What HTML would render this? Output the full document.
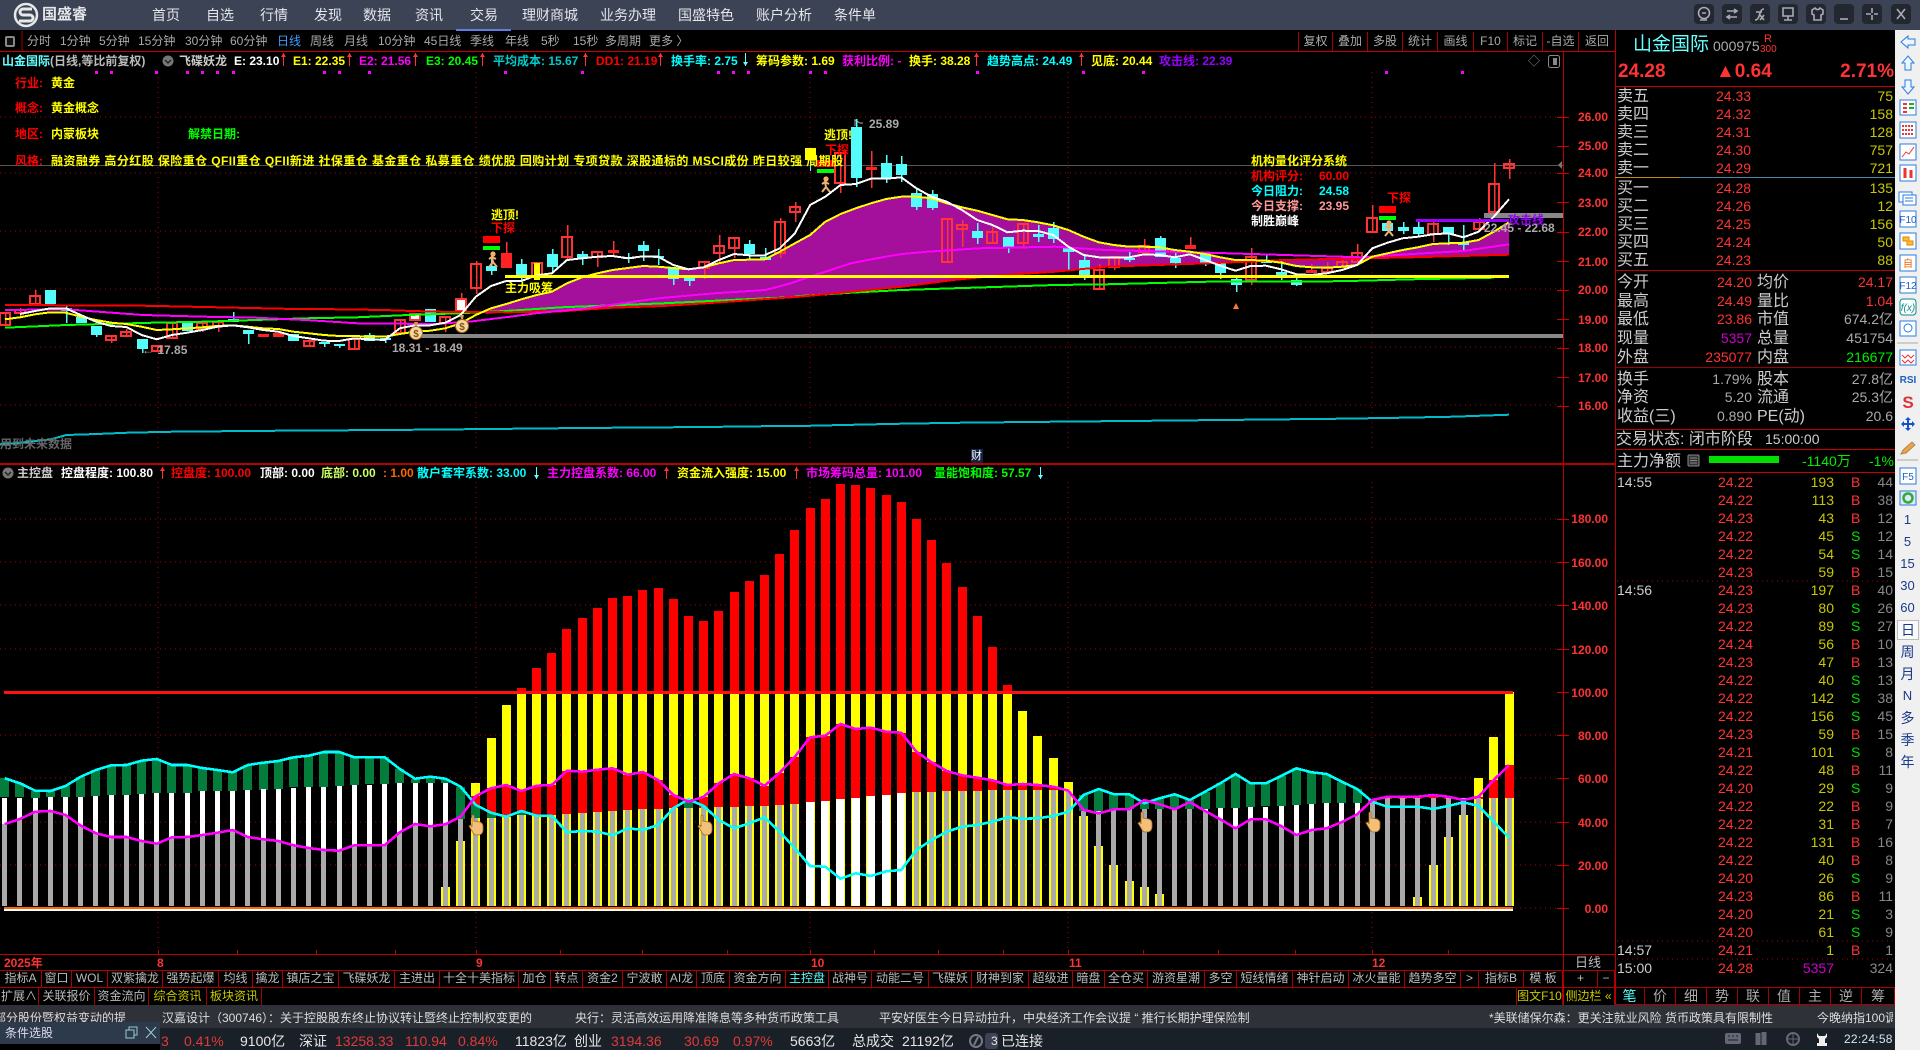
<!DOCTYPE html>
<html><head><meta charset="utf-8"><title>国盛睿</title>
<style>
html,body{margin:0;padding:0;background:#000;width:1920px;height:1050px;overflow:hidden}
body{position:relative;font:12px "Liberation Sans","WenQuanYi Zen Hei","Noto Sans CJK SC",sans-serif;color:#bbb}
.a{position:absolute;white-space:nowrap;line-height:16px;height:16px}
.bd{font-weight:bold}
.bar{position:absolute;left:0;top:0;width:1920px;height:30px;background:#3c4355}
.n{position:absolute;top:7px;font-size:14px;line-height:16px;color:#e4e6ea;white-space:nowrap}
.tb{position:absolute;top:33px;line-height:16px;color:#aaa;white-space:nowrap}
.btn{position:absolute;top:32px;height:19px;line-height:19px;text-align:center;color:#aaa;border-left:1px solid #a00;box-sizing:border-box}
.c{position:absolute;height:17px;line-height:16px;text-align:center;border-right:1px solid #a00;box-sizing:border-box;color:#bbb;white-space:nowrap;overflow:hidden}
.r1{top:970px}.r2{top:988px}.tab{top:988px;font-size:14px;color:#aaa}
.ax{position:absolute;right:312px;color:#ff3333;font-weight:bold;line-height:16px;white-space:nowrap}
.l{position:absolute;left:1617px;font-size:16px;line-height:18px;color:#ccc;white-space:nowrap;margin-top:1px}
.l2{position:absolute;left:1757px;font-size:16px;line-height:18px;color:#ccc;white-space:nowrap;margin-top:1px}
.v{position:absolute;font-size:14px;line-height:18px;white-space:nowrap;text-align:right}
.v1{left:1680px;width:72px;color:#ff3333}
.v2{left:1800px;width:93px;color:#ff3333}
.pr{left:1716px;text-align:left;color:#ff3333}
.q{left:1820px;width:73px;color:#c8c800}
.k{position:absolute;left:1615px;width:280px;height:18px;font-size:14px;line-height:18px}
.k i{position:absolute;font-style:normal;white-space:nowrap}
.tm{left:2px;color:#ccc}.p{left:103px;color:#ff3333}.qt{right:61px;color:#c8c800}.bs{left:236px;color:#ff3333}.g{color:#00e000}.la{right:2px;color:#888}
.sd{position:absolute;left:1895px;width:25px;text-align:center;color:#1a3a8a;font-size:13px;line-height:18px}
.tk{position:absolute;top:1010px;color:#ddd;line-height:16px;white-space:nowrap}
.s4{position:absolute;top:1033px;font-size:14px;line-height:16px;white-space:nowrap;color:#e6e6e6}
.rd{color:#e03a3a}
</style></head><body>
<svg id="s" width="1920" height="1050" viewBox="0 0 1920 1050" style="position:absolute;left:0;top:0" xmlns="http://www.w3.org/2000/svg"><g id="chart"></g></svg>

<div class="bar"></div><div style="position:absolute;left:456px;top:29px;width:55px;height:2px;background:#5b7fe0"></div>
<svg width="30" height="30" style="position:absolute;left:11px;top:0"><circle cx="15" cy="15" r="11" fill="none" stroke="#e8e8e8" stroke-width="2.5"/><path d="M21 9H12a3 3 0 0 0 0 6h7a3 3 0 0 1 0 6H8" fill="none" stroke="#e8e8e8" stroke-width="3"/></svg>
<div class="n" style="left:42px;font-size:15px;font-weight:bold">国盛睿</div>
<div class="n" style="left:152px">首页</div><div class="n" style="left:206px">自选</div><div class="n" style="left:260px">行情</div><div class="n" style="left:314px">发现</div><div class="n" style="left:363px">数据</div><div class="n" style="left:415px">资讯</div><div class="n" style="left:470px">交易</div><div class="n" style="left:522px">理财商城</div><div class="n" style="left:600px">业务办理</div><div class="n" style="left:678px">国盛特色</div><div class="n" style="left:756px">账户分析</div><div class="n" style="left:834px">条件单</div>
<svg width="226" height="30" style="position:absolute;left:1694px;top:0" viewBox="0 0 226 30">
<g fill="#23272f"><rect x="0" y="4" width="20" height="20" rx="4"/><rect x="28" y="4" width="20" height="20" rx="4"/><rect x="56" y="4" width="20" height="20" rx="4"/><rect x="84" y="4" width="20" height="20" rx="4"/><rect x="112" y="4" width="20" height="20" rx="4"/><rect x="140" y="4" width="20" height="20" rx="4"/><rect x="168" y="4" width="20" height="20" rx="4"/><rect x="197" y="4" width="20" height="20" rx="4"/></g>
<g fill="none" stroke="#aab" stroke-width="1.6"><circle cx="10" cy="13" r="5.5"/><path d="M8 13h4M6 20h7"/><path d="M33 11h10M33 17h10M40 9l3 2-3 2M36 15l-3 2 3 2"/><path d="M61 20c3 0 4-3 5-7 1-3 2-4 4-4M62 12h6M66 15l4 5M70 15l-4 5"/><path d="M89 8h10v8H89zM94 16v4M90 20h8"/><path d="M118 10l3-2c1 2 4 2 5 0l3 2v4l-2 1v5h-7v-5l-2-1z"/><path d="M146 19h8"/><path d="M178 8v5M178 15v5M172 14h5M180 14h4"/><path d="M203 9l8 10M211 9l-8 10"/></g></svg>

<!-- toolbar -->
<svg width="24" height="20" style="position:absolute;left:0;top:31px"><rect x="5" y="5" width="10" height="11" rx="2" fill="#888"/><rect x="7" y="7" width="6" height="7" fill="#111"/><path d="M22 0v20" stroke="#a00"/></svg>
<div class="tb" style="left:27px">分时</div><div class="tb" style="left:60px">1分钟</div><div class="tb" style="left:99px">5分钟</div><div class="tb" style="left:138px">15分钟</div><div class="tb" style="left:185px">30分钟</div><div class="tb" style="left:230px">60分钟</div><div class="tb" style="left:277px;color:#3a9cff">日线</div><div class="tb" style="left:310px">周线</div><div class="tb" style="left:344px">月线</div><div class="tb" style="left:378px">10分钟</div><div class="tb" style="left:424px">45日线</div><div class="tb" style="left:470px">季线</div><div class="tb" style="left:505px">年线</div><div class="tb" style="left:541px">5秒</div><div class="tb" style="left:573px">15秒</div><div class="tb" style="left:605px">多周期</div><div class="tb" style="left:649px">更多 〉</div>
<div class="btn" style="left:1298px;width:34px">复权</div><div class="btn" style="left:1332px;width:35px">叠加</div><div class="btn" style="left:1367px;width:35px">多股</div><div class="btn" style="left:1402px;width:35px">统计</div><div class="btn" style="left:1437px;width:36px">画线</div><div class="btn" style="left:1473px;width:34px">F10</div><div class="btn" style="left:1507px;width:35px">标记</div><div class="btn" style="left:1542px;width:36px">-自选</div><div class="btn" style="left:1578px;width:37px">返回</div>

<!-- main info row -->
<div class="a bd" style="left:2px;top:53px;color:#66ffff">山金国际<span style="color:#bbb">(日线,等比前复权)</span></div>
<svg width="14" height="14" style="position:absolute;left:161px;top:54px"><circle cx="7" cy="7" r="5.5" fill="#777"/><path d="M4 6l3 3 3-3" fill="none" stroke="#222" stroke-width="1.4"/></svg>
<div class="a bd" style="left:179px;top:53px;color:#ccc">飞碟妖龙</div>
<div class="a bd" style="left:234px;top:53px;color:#fff">E: 23.10</div>
<div class="a bd" style="left:293px;top:53px;color:#ff0">E1: 22.35</div>
<div class="a bd" style="left:359px;top:53px;color:#f0f">E2: 21.56</div>
<div class="a bd" style="left:426px;top:53px;color:#0f0">E3: 20.45</div>
<div class="a bd" style="left:493px;top:53px;color:#0cc">平均成本: 15.67</div>
<div class="a bd" style="left:596px;top:53px;color:#f00">DD1: 21.19</div>
<div class="a bd" style="left:671px;top:53px;color:#0ff">换手率: 2.75</div>
<div class="a bd" style="left:756px;top:53px;color:#ff0">筹码参数: 1.69</div>
<div class="a bd" style="left:842px;top:53px;color:#f0f">获利比例: -</div>
<div class="a bd" style="left:909px;top:53px;color:#ff0">换手: 38.28</div>
<div class="a bd" style="left:987px;top:53px;color:#0ff">趋势高点: 24.49</div>
<div class="a bd" style="left:1091px;top:53px;color:#ff0">见底: 20.44</div>
<div class="a bd" style="left:1159px;top:53px;color:#90f">攻击线: 22.39</div>
<div class="a" style="left:1528px;top:53px;color:#888">◇</div>
<svg width="12" height="14" style="position:absolute;left:1548px;top:55px"><rect x="0.5" y="0.5" width="11" height="12" rx="2" fill="none" stroke="#888"/><rect x="5" y="3" width="4" height="7" fill="#888"/></svg>

<!-- left text -->
<div class="a bd" style="left:15px;top:75px;color:#f00">行业:<span style="color:#ff0;position:absolute;left:36px">黄金</span></div>
<div class="a bd" style="left:15px;top:100px;color:#f00">概念:<span style="color:#ff0;position:absolute;left:36px">黄金概念</span></div>
<div class="a bd" style="left:15px;top:126px;color:#f00">地区:<span style="color:#ff0;position:absolute;left:36px">内蒙板块</span></div>
<div class="a bd" style="left:188px;top:126px;color:#0f0">解禁日期:</div>
<div class="a bd" style="left:15px;top:153px;color:#f00">风格:<span style="color:#ff0;position:absolute;left:36px;letter-spacing:.42px">融资融券 高分红股 保险重仓 QFII重仓 QFII新进 社保重仓 基金重仓 私募重仓 绩优股 回购计划 专项贷款 深股通标的 MSCI成份 昨日较强 周期股</span></div>

<!-- chart labels -->
<div class="a bd" style="left:869px;top:116px;color:#aaa">25.89</div>
<div class="a bd" style="left:142px;top:342px;color:#aaa">← 17.85</div>
<div class="a bd" style="left:392px;top:340px;color:#aaa">18.31 - 18.49</div>
<div class="a bd" style="left:0;top:436px;color:#666">用到未来数据</div>
<div class="a bd" style="left:505px;top:280px;color:#ff0">主力吸筹</div>
<div class="a bd" style="left:491px;top:207px;color:#ff0">逃顶!</div><div class="a bd" style="left:491px;top:220px;color:#f00">下探</div>
<div class="a bd" style="left:824px;top:127px;color:#ff0">逃顶!</div><div class="a bd" style="left:825px;top:142px;color:#f00">下探</div>
<div class="a bd" style="left:1387px;top:190px;color:#f00">下探</div>
<div class="a bd" style="left:1251px;top:153px;color:#ff0">机构量化评分系统</div>
<div class="a bd" style="left:1251px;top:168px;color:#f00">机构评分:<span style="position:absolute;left:68px">60.00</span></div>
<div class="a bd" style="left:1251px;top:183px;color:#0ff">今日阻力:<span style="position:absolute;left:68px">24.58</span></div>
<div class="a bd" style="left:1251px;top:198px;color:#f99">今日支撑:<span style="position:absolute;left:68px">23.95</span></div>
<div class="a bd" style="left:1251px;top:213px;color:#fff">制胜巅峰</div>
<div class="a bd" style="left:1484px;top:220px;color:#aaa">22.45 - 22.68</div>
<div class="a bd" style="left:1508px;top:212px;color:#90f">攻击线</div>
<div class="a" style="left:971px;top:449px;color:#fff;background:#124;width:12px;height:14px;line-height:14px;font-size:11px">财</div>

<!-- axis main -->
<div class="ax" style="top:109px">26.00</div><div class="ax" style="top:138px">25.00</div><div class="ax" style="top:165px">24.00</div><div class="ax" style="top:195px">23.00</div><div class="ax" style="top:224px">22.00</div><div class="ax" style="top:254px">21.00</div><div class="ax" style="top:282px">20.00</div><div class="ax" style="top:312px">19.00</div><div class="ax" style="top:340px">18.00</div><div class="ax" style="top:370px">17.00</div><div class="ax" style="top:398px">16.00</div>
<div class="ax" style="top:511px">180.00</div><div class="ax" style="top:555px">160.00</div><div class="ax" style="top:598px">140.00</div><div class="ax" style="top:642px">120.00</div><div class="ax" style="top:685px">100.00</div><div class="ax" style="top:728px">80.00</div><div class="ax" style="top:771px">60.00</div><div class="ax" style="top:815px">40.00</div><div class="ax" style="top:858px">20.00</div><div class="ax" style="top:901px">0.00</div>

<!-- lower info -->
<svg width="14" height="14" style="position:absolute;left:1px;top:466px"><circle cx="7" cy="7" r="5.5" fill="#777"/><path d="M4 6l3 3 3-3" fill="none" stroke="#222" stroke-width="1.4"/></svg>
<div class="a bd" style="left:17px;top:465px;color:#ccc">主控盘</div>
<div class="a bd" style="left:61px;top:465px;color:#fff">控盘程度: 100.80</div>
<div class="a bd" style="left:171px;top:465px;color:#f00">控盘度: 100.00</div>
<div class="a bd" style="left:260px;top:465px;color:#fff">顶部: 0.00</div>
<div class="a bd" style="left:321px;top:465px;color:#cf6">底部: 0.00</div><div class="a bd" style="left:383px;top:465px;color:#f60">: 1.00</div>
<div class="a bd" style="left:417px;top:465px;color:#0ff">散户套牢系数: 33.00</div>
<div class="a bd" style="left:547px;top:465px;color:#f0f">主力控盘系数: 66.00</div>
<div class="a bd" style="left:677px;top:465px;color:#ff0">资金流入强度: 15.00</div>
<div class="a bd" style="left:806px;top:465px;color:#f0f">市场筹码总量: 101.00</div>
<div class="a bd" style="left:934px;top:465px;color:#0f0">量能饱和度: 57.57</div>

<!-- time axis -->
<div class="a bd" style="left:4px;top:955px;color:#f33">2025年</div><div class="a bd" style="left:157px;top:955px;color:#f33">8</div><div class="a bd" style="left:476px;top:955px;color:#f33">9</div><div class="a bd" style="left:811px;top:955px;color:#f33">10</div><div class="a bd" style="left:1069px;top:955px;color:#f33">11</div><div class="a bd" style="left:1372px;top:955px;color:#f33">12</div>
<div class="a" style="left:1575px;top:955px;color:#bbb;font-size:13px">日线</div>

<!-- buttons -->
<div class="c r1" style="left:0;width:42px">指标A</div><div class="c r1" style="left:42px;width:30px">窗口</div><div class="c r1" style="left:72px;width:36px">WOL</div><div class="c r1" style="left:108px;width:55px">双紫擒龙</div><div class="c r1" style="left:163px;width:56px">强势起爆</div><div class="c r1" style="left:219px;width:34px">均线</div><div class="c r1" style="left:253px;width:30px">擒龙</div><div class="c r1" style="left:283px;width:56px">镇店之宝</div><div class="c r1" style="left:339px;width:56px">飞碟妖龙</div><div class="c r1" style="left:395px;width:45px">主进出</div><div class="c r1" style="left:440px;width:79px">十全十美指标</div><div class="c r1" style="left:519px;width:32px">加仓</div><div class="c r1" style="left:551px;width:32px">转点</div><div class="c r1" style="left:583px;width:40px">资金2</div><div class="c r1" style="left:623px;width:44px">宁波敢</div><div class="c r1" style="left:667px;width:30px">AI龙</div><div class="c r1" style="left:697px;width:33px">顶底</div><div class="c r1" style="left:730px;width:56px">资金方向</div><div class="c r1" style="left:786px;width:43px;color:#5ff">主控盘</div><div class="c r1" style="left:829px;width:43px">战神号</div><div class="c r1" style="left:872px;width:57px">动能二号</div><div class="c r1" style="left:929px;width:43px">飞碟妖</div><div class="c r1" style="left:972px;width:57px">财神到家</div><div class="c r1" style="left:1029px;width:44px">超级进</div><div class="c r1" style="left:1073px;width:32px">暗盘</div><div class="c r1" style="left:1105px;width:43px">全仓买</div><div class="c r1" style="left:1148px;width:57px">游资星潮</div><div class="c r1" style="left:1205px;width:32px">多空</div><div class="c r1" style="left:1237px;width:56px">短线情绪</div><div class="c r1" style="left:1293px;width:56px">神针启动</div><div class="c r1" style="left:1349px;width:56px">冰火量能</div><div class="c r1" style="left:1405px;width:56px">趋势多空</div><div class="c r1" style="left:1461px;width:18px">&gt;</div><div class="c r1" style="left:1479px;width:45px">指标B</div><div class="c r1" style="left:1524px;width:39px">模 板</div><div class="c r1" style="left:1563px;width:35px;border-left:1px solid #a00">+</div><div class="c r1" style="left:1598px;width:17px">−</div>
<div class="c r2" style="left:0;width:39px">扩展∧</div><div class="c r2" style="left:39px;width:56px">关联报价</div><div class="c r2" style="left:95px;width:54px">资金流向</div><div class="c r2" style="left:149px;width:58px;color:#c8c800">综合资讯</div><div class="c r2" style="left:207px;width:55px;color:#c8c800">板块资讯</div>
<div class="c r2" style="left:1516px;width:47px;color:#c8c800;border-left:1px solid #a00">图文F10</div><div class="c r2" style="left:1563px;width:52px;color:#c8c800">侧边栏 «</div>
<div class="c tab" style="left:1615px;width:30px;color:#5ff">笔</div><div class="c tab" style="left:1645px;width:31px">价</div><div class="c tab" style="left:1676px;width:31px">细</div><div class="c tab" style="left:1707px;width:31px">势</div><div class="c tab" style="left:1738px;width:31px">联</div><div class="c tab" style="left:1769px;width:31px">值</div><div class="c tab" style="left:1800px;width:31px">主</div><div class="c tab" style="left:1831px;width:31px">逆</div><div class="c tab" style="left:1862px;width:33px">筹</div>

<!-- ticker -->
<div style="position:absolute;left:0;top:1005px;width:1895px;height:23px;background:#2e3138;overflow:hidden">
<div class="tk" style="top:5px;left:-6px">部分股份暨权益变动的提</div>
<div class="tk" style="top:5px;left:162px">汉嘉设计（300746）：关于控股股东终止协议转让暨终止控制权变更的</div>
<div class="tk" style="top:5px;left:575px">央行：灵活高效运用降准降息等多种货币政策工具</div>
<div class="tk" style="top:5px;left:879px">平安好医生今日异动拉升，中央经济工作会议提 “ 推行长期护理保险制</div>
<div class="tk" style="top:5px;left:1489px">*美联储保尔森：更关注就业风险 货币政策具有限制性</div>
<div class="tk" style="top:5px;left:1817px;width:76px;overflow:hidden">今晚纳指100调</div></div>
<div style="position:absolute;left:0;top:1028px;width:1895px;height:22px;background:#1a2027"></div>
<div style="position:absolute;left:0;top:1022px;width:160px;height:22px;background:#2c3a4b;color:#dde;font-size:12px;line-height:22px;text-indent:5px">条件选股</div>
<div style="position:absolute;left:0;top:1044px;width:160px;height:6px;background:#000"></div>
<svg width="40" height="20" style="position:absolute;left:120px;top:1023px"><g fill="none" stroke="#9cc"><rect x="6" y="7" width="8" height="8"/><path d="M9 7V4h8v8h-3"/><path d="M26 4l10 11M36 4L26 15"/></g></svg>
<div class="s4 rd" style="left:161px">3</div><div class="s4 rd" style="left:184px">0.41%</div><div class="s4" style="left:240px">9100亿</div><div class="s4" style="left:299px">深证</div><div class="s4 rd" style="left:335px">13258.33</div><div class="s4 rd" style="left:405px">110.94</div><div class="s4 rd" style="left:458px">0.84%</div><div class="s4" style="left:515px">11823亿</div><div class="s4" style="left:574px">创业</div><div class="s4 rd" style="left:611px">3194.36</div><div class="s4 rd" style="left:684px">30.69</div><div class="s4 rd" style="left:733px">0.97%</div><div class="s4" style="left:790px">5663亿</div><div class="s4" style="left:852px">总成交</div><div class="s4" style="left:902px">21192亿</div>
<svg width="32" height="20" style="position:absolute;left:966px;top:1031px"><circle cx="10" cy="10" r="6" fill="none" stroke="#778" stroke-width="2"/><path d="M8 14l4-8" stroke="#778" stroke-width="2"/><rect x="19" y="2" width="13" height="16" rx="3" fill="#3c4355"/></svg>
<div class="s4" style="left:991px;font-size:12px">3</div><div class="s4" style="left:1001px">已连接</div>
<svg width="120" height="22" style="position:absolute;left:1720px;top:1028px"><rect x="5" y="5" width="16" height="11" rx="2" fill="#667"/><path d="M8 8h2M12 8h2M16 8h2M8 12h10" stroke="#1a2027"/><path d="M38 5v12M44 4v13" stroke="#667" stroke-width="5"/><circle cx="73" cy="11" r="6" fill="none" stroke="#667" stroke-width="2"/><path d="M66 11h14M73 4v14" stroke="#667"/><path d="M97 5l2 3h6l2-3v4l-2 2v4h2v3H97v-3h2v-4l-2-2z" fill="#eee"/></svg>
<div class="s4" style="left:1844px;top:1031px;color:#d8e4f0;font-size:12px;letter-spacing:.25px">22:24:58</div>

<!-- right panel -->
<div class="a" style="left:1633px;top:34px;height:22px;line-height:22px;font-size:19px;color:#66ffff">山金国际</div>
<div class="a" style="left:1713px;top:38px;font-size:14px;color:#aaa">000975</div>
<div class="a" style="left:1764px;top:33px;font-size:11px;color:#f33;line-height:12px">R</div><div class="a" style="left:1760px;top:44px;font-size:10px;color:#f33;line-height:12px">300</div>
<div class="a bd" style="left:1618px;top:62px;font-size:19px;line-height:20px;height:20px;color:#ff3333">24.28</div>
<div class="a bd" style="left:1716px;top:62px;font-size:19px;line-height:20px;height:20px;color:#ff3333">▲0.64</div>
<div class="a bd" style="left:1835px;width:59px;text-align:right;top:62px;font-size:19px;line-height:20px;height:20px;color:#ff3333">2.71%</div>

<div class="l" style="top:87px">卖五</div><div class="v pr" style="top:87px">24.33</div><div class="v q" style="top:87px">75</div>
<div class="l" style="top:105px">卖四</div><div class="v pr" style="top:105px">24.32</div><div class="v q" style="top:105px">158</div>
<div class="l" style="top:123px">卖三</div><div class="v pr" style="top:123px">24.31</div><div class="v q" style="top:123px">128</div>
<div class="l" style="top:141px">卖二</div><div class="v pr" style="top:141px">24.30</div><div class="v q" style="top:141px">757</div>
<div class="l" style="top:159px">卖一</div><div class="v pr" style="top:159px">24.29</div><div class="v q" style="top:159px">721</div>
<div class="l" style="top:179px">买一</div><div class="v pr" style="top:179px">24.28</div><div class="v q" style="top:179px">135</div>
<div class="l" style="top:197px">买二</div><div class="v pr" style="top:197px">24.26</div><div class="v q" style="top:197px">12</div>
<div class="l" style="top:215px">买三</div><div class="v pr" style="top:215px">24.25</div><div class="v q" style="top:215px">156</div>
<div class="l" style="top:233px">买四</div><div class="v pr" style="top:233px">24.24</div><div class="v q" style="top:233px">50</div>
<div class="l" style="top:251px">买五</div><div class="v pr" style="top:251px">24.23</div><div class="v q" style="top:251px">88</div>

<div class="l" style="top:273px">今开</div><div class="v v1" style="top:273px">24.20</div><div class="l2" style="top:273px">均价</div><div class="v v2" style="top:273px">24.17</div>
<div class="l" style="top:292px">最高</div><div class="v v1" style="top:292px">24.49</div><div class="l2" style="top:292px">量比</div><div class="v v2" style="top:292px">1.04</div>
<div class="l" style="top:310px">最低</div><div class="v v1" style="top:310px">23.86</div><div class="l2" style="top:310px">市值</div><div class="v v2" style="top:310px;color:#aaa">674.2亿</div>
<div class="l" style="top:329px">现量</div><div class="v v1" style="top:329px;color:#c0c">5357</div><div class="l2" style="top:329px">总量</div><div class="v v2" style="top:329px;color:#aaa">451754</div>
<div class="l" style="top:348px">外盘</div><div class="v v1" style="top:348px">235077</div><div class="l2" style="top:348px">内盘</div><div class="v v2" style="top:348px;color:#0e0">216677</div>
<div class="l" style="top:370px">换手</div><div class="v v1" style="top:370px;color:#aaa">1.79%</div><div class="l2" style="top:370px">股本</div><div class="v v2" style="top:370px;color:#aaa">27.8亿</div>
<div class="l" style="top:388px">净资</div><div class="v v1" style="top:388px;color:#aaa">5.20</div><div class="l2" style="top:388px">流通</div><div class="v v2" style="top:388px;color:#aaa">25.3亿</div>
<div class="l" style="top:407px">收益(三)</div><div class="v v1" style="top:407px;color:#aaa">0.890</div><div class="l2" style="top:407px">PE(动)</div><div class="v v2" style="top:407px;color:#aaa">20.6</div>
<div class="l" style="top:430px;left:1616px">交易状态: 闭市阶段</div><div class="v" style="left:1765px;top:430px;color:#ccc">15:00:00</div>
<div class="l" style="top:452px">主力净额</div>
<svg width="14" height="14" style="position:absolute;left:1687px;top:454px"><rect x="1" y="1" width="11" height="11" rx="1" fill="#333" stroke="#888"/><path d="M3 4h7M3 6.5h7M3 9h7" stroke="#888"/></svg>
<div style="position:absolute;left:1709px;top:456px;width:70px;height:7px;background:#00e000"></div>
<div class="v" style="left:1802px;top:452px;color:#0e0">-1140万</div><div class="v" style="left:1869px;top:452px;color:#0e0">-1%</div>

<div class="k" style="top:473px"><i class="tm">14:55</i><i class="p">24.22</i><i class="qt">193</i><i class="bs">B</i><i class="la">44</i></div>
<div class="k" style="top:491px"><i class="p">24.22</i><i class="qt">113</i><i class="bs">B</i><i class="la">38</i></div>
<div class="k" style="top:509px"><i class="p">24.23</i><i class="qt">43</i><i class="bs">B</i><i class="la">12</i></div>
<div class="k" style="top:527px"><i class="p">24.22</i><i class="qt">45</i><i class="bs g">S</i><i class="la">12</i></div>
<div class="k" style="top:545px"><i class="p">24.22</i><i class="qt">54</i><i class="bs g">S</i><i class="la">14</i></div>
<div class="k" style="top:563px"><i class="p">24.23</i><i class="qt">59</i><i class="bs">B</i><i class="la">15</i></div>
<div class="k" style="top:581px"><i class="tm">14:56</i><i class="p">24.23</i><i class="qt">197</i><i class="bs">B</i><i class="la">40</i></div>
<div class="k" style="top:599px"><i class="p">24.23</i><i class="qt">80</i><i class="bs g">S</i><i class="la">26</i></div>
<div class="k" style="top:617px"><i class="p">24.22</i><i class="qt">89</i><i class="bs g">S</i><i class="la">27</i></div>
<div class="k" style="top:635px"><i class="p">24.24</i><i class="qt">56</i><i class="bs">B</i><i class="la">10</i></div>
<div class="k" style="top:653px"><i class="p">24.23</i><i class="qt">47</i><i class="bs">B</i><i class="la">13</i></div>
<div class="k" style="top:671px"><i class="p">24.22</i><i class="qt">40</i><i class="bs g">S</i><i class="la">13</i></div>
<div class="k" style="top:689px"><i class="p">24.22</i><i class="qt">142</i><i class="bs g">S</i><i class="la">38</i></div>
<div class="k" style="top:707px"><i class="p">24.22</i><i class="qt">156</i><i class="bs g">S</i><i class="la">45</i></div>
<div class="k" style="top:725px"><i class="p">24.23</i><i class="qt">59</i><i class="bs">B</i><i class="la">15</i></div>
<div class="k" style="top:743px"><i class="p">24.21</i><i class="qt">101</i><i class="bs g">S</i><i class="la">8</i></div>
<div class="k" style="top:761px"><i class="p">24.22</i><i class="qt">48</i><i class="bs">B</i><i class="la">11</i></div>
<div class="k" style="top:779px"><i class="p">24.20</i><i class="qt">29</i><i class="bs g">S</i><i class="la">9</i></div>
<div class="k" style="top:797px"><i class="p">24.22</i><i class="qt">22</i><i class="bs">B</i><i class="la">9</i></div>
<div class="k" style="top:815px"><i class="p">24.22</i><i class="qt">31</i><i class="bs">B</i><i class="la">7</i></div>
<div class="k" style="top:833px"><i class="p">24.22</i><i class="qt">131</i><i class="bs">B</i><i class="la">16</i></div>
<div class="k" style="top:851px"><i class="p">24.22</i><i class="qt">40</i><i class="bs">B</i><i class="la">8</i></div>
<div class="k" style="top:869px"><i class="p">24.20</i><i class="qt">26</i><i class="bs g">S</i><i class="la">9</i></div>
<div class="k" style="top:887px"><i class="p">24.23</i><i class="qt">86</i><i class="bs">B</i><i class="la">11</i></div>
<div class="k" style="top:905px"><i class="p">24.20</i><i class="qt">21</i><i class="bs g">S</i><i class="la">3</i></div>
<div class="k" style="top:923px"><i class="p">24.20</i><i class="qt">61</i><i class="bs g">S</i><i class="la">9</i></div>
<div class="k" style="top:941px"><i class="tm">14:57</i><i class="p">24.21</i><i class="qt">1</i><i class="bs">B</i><i class="la">1</i></div>
<div class="k" style="top:959px"><i class="tm">15:00</i><i class="p">24.28</i><i class="qt" style="color:#c0c">5357</i><i class="la">324</i></div>

<!-- sidebar -->
<div style="position:absolute;left:1895px;top:30px;width:25px;height:1020px;background:#f0f0f0"></div>
<svg width="25" height="480" viewBox="1895 30 25 480" style="position:absolute;left:1895px;top:30px">
<g fill="#eef5ff" stroke="#2a7de1" stroke-width="1">
<path d="M1901 42l7-6v3h7v6h-7v3z"/><path d="M1908 56l6 7h-3v7h-6v-7h-3z"/><path d="M1908 94l6-7h-3v-7h-6v7h-3z"/>
<rect x="1900" y="100" width="16" height="15" fill="#fff"/><rect x="1900" y="122" width="16" height="16" fill="#fff"/><rect x="1900" y="144" width="16" height="16" fill="#fff"/><rect x="1900" y="165" width="16" height="16" fill="#fff"/>
<rect x="1899" y="192" width="13" height="10" fill="#fff"/><rect x="1903" y="195" width="13" height="10" fill="#fff"/>
<rect x="1900" y="211" width="16" height="16" fill="#fff"/><rect x="1900" y="233" width="16" height="16" fill="#fff"/><rect x="1900" y="255" width="16" height="16" fill="#fff"/><rect x="1900" y="277" width="16" height="16" fill="#fff"/><rect x="1900" y="299" width="16" height="16" fill="#fff" rx="3" stroke="#0a8a8a"/><rect x="1900" y="321" width="16" height="15" fill="#fff"/><circle cx="1908" cy="328" r="4" fill="#fff"/>
<rect x="1900" y="350" width="16" height="15" fill="#fff"/><rect x="1900" y="468" width="16" height="16" fill="#fff"/></g>
<path d="M1903 104h4M1903 108h4M1903 112h4" stroke="#e33" stroke-width="2"/><path d="M1909 104h5M1909 108h5" stroke="#2a2" stroke-width="2"/>
<path d="M1902 126h12M1902 130h12M1902 134h12" stroke="#e33" stroke-width="2" stroke-dasharray="2 1"/>
<path d="M1902 157l4-5 3 2 5-7" fill="none" stroke="#e33"/><path d="M1905 168v10M1911 170v8" stroke="#e33" stroke-width="3"/>
<path d="M1905 198h8M1905 201h8" stroke="#2a7de1"/>
<path d="M1903 237h6v4h4v4h-6v-4h-4z" fill="#fb3" stroke="#d80"/>
<path d="M1902 355l3 3 3-3 3 3 3-3M1902 360l3 3 3-3 3 3 3-3" fill="none" stroke="#e33"/>
<g font-family="Liberation Sans,sans-serif" font-size="10" fill="#1d5fc0" text-anchor="middle"><text x="1908" y="223">F10</text><text x="1908" y="267" fill="#e60">自</text><text x="1908" y="289">F12</text><text x="1908" y="311" fill="#0a8a8a" font-style="italic">f(x)</text><text x="1908" y="383" font-weight="bold">RSI</text><text x="1908" y="408" font-size="17" font-weight="bold" fill="#d33">S</text><text x="1908" y="480">F5</text></g>
<path d="M1908 417l3 3h-2v3h3v-2l3 3-3 3v-2h-3v3h2l-3 3-3-3h2v-3h-3v2l-3-3 3-3v2h3v-3h-2z" fill="#1552c8"/>
<path d="M1901 454l2-4 9-8 3 3-9 8z" fill="#f2a23c" stroke="#a86"/>
<path d="M1897 343h21M1897 460h21" stroke="#aaa"/>
<rect x="1900" y="491" width="16" height="14" fill="#dce8f8" stroke="#2a7de1"/><circle cx="1908" cy="498" r="4.5" fill="none" stroke="#3a3" stroke-width="2.5"/>
</svg>
<div class="sd" style="top:511px">1</div><div class="sd" style="top:533px">5</div><div class="sd" style="top:555px">15</div><div class="sd" style="top:577px">30</div><div class="sd" style="top:599px">60</div>
<div class="sd" style="top:620px;left:1897px;width:22px;height:20px;background:#f9f9f9;border:1px solid #bbb;box-sizing:border-box;font-size:14px">日</div>
<div class="sd" style="top:643px;font-size:14px">周</div><div class="sd" style="top:665px;font-size:14px">月</div><div class="sd" style="top:687px">N</div><div class="sd" style="top:709px;font-size:14px">多</div><div class="sd" style="top:731px;font-size:14px">季</div><div class="sd" style="top:753px;font-size:14px">年</div>

<script>
var X=function(i){return 4.8+15.194*i},o=[];
function R(x,y,w,h,c){if(h<=0)return;o.push('<rect x="'+Math.round(x)+'" y="'+Math.round(y)+'" width="'+w+'" height="'+Math.round(h)+'" fill="'+c+'"/>')}
function L(p,c,w){o.push('<polyline shape-rendering="crispEdges" points="'+p.map(function(a){return a[0].toFixed(1)+','+a[1].toFixed(1)}).join(' ')+'" fill="none" stroke="'+c+'" stroke-width="'+w+'" stroke-linejoin="round"/>')}
function z8(a){var r=[];for(var i=0;i<a.length;i+=2)r.push([a[i]/1.96,a[i+1]/3+180]);return r}
function z9(a){var r=[];for(var i=0;i<a.length;i+=2)r.push([a[i]/1.96+800,a[i+1]/3+100]);return r}
function D(x1,y1,x2,y2,c){o.push('<path d="M'+x1+' '+y1+'L'+x2+' '+y2+'" stroke="'+(c||'#a00')+'" stroke-dasharray="1 4"/>')}
function A(x,y0,y1,c,up){R(x,y0,1,y1-y0,c);var h=up?y0:y1,d=up?4:-4;o.push('<path d="M'+(x+.5)+' '+h+'l2.5 '+d+'h-5z" fill="'+c+'"/>')}
var vg=[158,476,810,1068,1372];
vg.forEach(function(x){D(x,72,x,450);D(x,482,x,950)});
[117,173,231,289,347,405,519,562,605,649,735,778,822,865,908].forEach(function(y){D(0,y,1563,y)});
// indicator arrows
[283,349,415,482,585,660,976,1081].forEach(function(x){A(x,53,66,'#f33',1)});A(745,53,66,'#6ff',0);
[162,666,796].forEach(function(x){A(x,467,479,'#f33',1)});A(536,467,479,'#6ff',0);A(1040,467,479,'#6ff',0);
// high flag
o.push('<path d="M855 119v7M855 120l5 3 3 0" fill="none" stroke="#aaa"/>');
// purple ticks
[95.5,111,156,187,202,217,233,324,339,369,505,582,718,733,748,810,825,976.5,1082.5,1143,1386,1462].forEach(function(x){R(x-1,71,3,3,'#f0f')});
// borders
R(0,51,1615,1,'#c00');R(0,463,1615,2,'#b00');R(0,954,1615,1,'#b00');R(0,970,1615,1,'#a00');R(0,987,1895,1,'#a00');
R(1563,51,1,954,'#b00');R(1615,30,1,975,'#b00');R(1563,970,1,17,'#a00');
R(1615,86,280,1,'#c00');R(1615,177,65,1,'#c80');R(1680,177,215,1,'#48a');R(1615,270,280,1,'#b00');R(1615,367,280,1,'#900');R(1615,429,280,1,'#b00');R(1615,449,280,1,'#c00');R(1615,472,280,1,'#c00');
R(1615,1004,280,1,'#a00');
D(1617,581,1895,581);D(1617,941,1895,941);D(1617,959,1895,959);
[117,146,173,202,232,261,290,319,348,377,406,519,562,605,649,692,735,778,822,865,908].forEach(function(y){R(1557,y,12,1,'#c00')});
[158,237,316,395,476,560,642,727,810,874,938,1003,1068,1143,1218,1295,1372,1448].forEach(function(x){R(x,950,1,4,'#b00')});
// main background lines
R(0,165,1563,1,'#555');o.push('<path d="M1558 165l4-4v8z" fill="#777"/>');
R(416,334,1147,4,'#888');R(1484,213,79,5,'#888');
// main MAs
var Y1=[418,412,403,397,398,410,420,428,432,440,450,448,445,442,438,436,440,445,447,455,460,465,468,468,470,470,462,455,452,445,430,405,385,372,358,345,335,310,292,280,270,264,258,260,264,268,262,250,240,239,238,215,190];
var Y2=[405,365,342,325,310,297,290,290,295,310,322,332,345,358,360,367,376,390,410,427,435,440,440,442,450,455,462,472,480,480,482,488,498,502,503,500,495,470,460,450,442,432,430,428,420,395,367];
var W1=[402,393,385,385,405,425,438,441,465,478,465,458,450,440,436,442,450,455,468,475,482,483,475,478,480,445,436,436,428,405,350,318,303,303,286,280,240,235,230,228,235,229,230,255,268,262,240,222,226,226,205,160];
var W2=[315,290,255,252,236,236,232,265,290,305,330,360,375,397,392,393,405,440,465,472,472,472,463,465,472,463,480,497,512,498,497,508,523,525,520,510,495,445,428,415,410,403,400,412,395,350,298];
var yp=[];Y1.forEach(function(v,i){yp.push([X(i),v/3+180])});Y2.forEach(function(v,i){yp.push([X(i+53),v/3+100])});
var wp=[];W1.forEach(function(v,i){wp.push([X(i+1),v/3+180])});W2.forEach(function(v,i){wp.push([X(i+53),v/3+100])});
var red=z8([10,375,280,377,400,381,490,384,580,387,670,388,750,390,850,395,1000,397,1100,394,1200,383,1300,378,1400,368,1550,352]).concat(z9([0,590,100,575,200,560,300,540,400,525,500,515,600,500,800,490,950,480,1100,475,1200,472,1390,464]));
var mag=z8([10,390,130,388,280,405,400,410,500,413,600,420,700,430,850,432,920,425,1000,410,1050,400,1150,385,1290,355,1400,340,1500,330,1550,310]).concat(z9([0,540,40,520,100,490,150,475,200,462,250,455,300,450,350,445,500,440,600,450,800,458,950,465,1100,472,1200,462,1300,453,1390,433]));
var grn=z8([10,443,130,435,300,428,400,425,500,420,600,415,700,412,800,405,900,400,1000,392,1100,382,1300,370,1500,355,1550,352]).concat(z9([0,588,100,578,200,570,300,565,400,560,500,555,600,553,800,545,1000,545,1100,542,1200,538,1360,533]));
var teal=z8([0,793,30,790,100,778,130,765,190,762,250,758,340,755,550,752,760,750,960,747,1140,744,1380,741,1530,738]).concat(z9([0,978,110,974,200,971,320,968,500,965,700,962,880,959,1060,956,1180,953,1280,950,1390,944]));
// purple fill
var fu=yp.slice(32),fl=red.filter(function(a){return a[0]>486}).reverse();
o.push('<polygon points="485,314 '+fu.concat(fl).map(function(a){return a[0].toFixed(1)+','+a[1].toFixed(1)}).join(' ')+'" fill="#a4109b"/>');
// candles
var cs=[0,'r',313,313,325,325,1,'r',308,310,313,317,2,'r',290,296,304,304,3,'c',290,290,304,304,4,'c',306,308,311,323,5,'c',317,317,323,323,6,'c',326,326,335,337,7,'r',336,336,340,343,8,'r',329,332,336,336,9,'c',339,339,349,353,10,'r',346,346,351,351,11,'r',323,323,338,338,12,'c',323,323,331,331,13,'r',323,323,329,332,14,'r',322,322,326,332,15,'c',312,319,322,322,16,'c',330,330,334,344,17,'f',334,334,337,337,18,'f',333,333,337,337,19,'c',334,334,341,341,20,'r',341,341,346,346,21,'c',342,342,344,347,22,'c',344,344,345,348,23,'r',339,339,349,349,24,'c',333,335,341,341,25,'c',338,338,340,343,26,'r',320,320,333,333,27,'w',314,314,320,320,28,'c',309,309,322,322,29,'r',317,317,323,332,30,'w',293,299,311,311,31,'r',261,264,288,294,32,'c',253,266,271,275,33,'f',242,253,268,268,34,'c',259,264,276,280,35,'r',263,263,277,277,36,'c',249,254,267,273,37,'r',225,237,257,259,38,'c',251,254,258,265,39,'r',252,252,257,267,40,'f',241,250,253,257,41,'c',253,257,259,263,42,'c',241,245,251,261,43,'c',249,256,258,265,44,'c',268,268,279,285,45,'c',278,278,281,286,46,'r',262,262,268,279,47,'r',235,246,253,263,48,'r',238,238,248,258,49,'c',240,244,254,260,50,'c',248,257,260,260,51,'r',218,222,253,258,52,'r',202,207,212,222,55,'r',153,153,183,193,56,'c',119,127,178,187,57,'f',151,167,170,188,58,'c',155,163,178,183,59,'c',156,164,175,182,60,'c',188,193,207,210,61,'c',190,194,208,210,62,'r',219,219,262,263,63,'r',220,225,229,247,64,'c',223,231,238,244,65,'r',227,232,243,243,66,'c',237,237,247,253,67,'r',224,224,243,247,68,'c',225,234,237,242,69,'c',222,228,239,243,70,'c',248,248,252,270,71,'c',255,260,275,280,72,'r',264,270,289,289,73,'r',257,257,267,270,74,'c',252,258,260,262,75,'r',239,246,252,252,76,'c',236,238,257,257,77,'c',251,258,263,268,78,'f',237,245,249,249,79,'c',253,253,263,266,80,'c',263,263,273,279,81,'c',275,279,285,292,82,'r',248,257,280,285,83,'c',255,260,263,263,84,'c',260,272,278,280,85,'c',278,280,285,286,86,'f',264,270,273,273,87,'r',262,268,272,272,88,'r',260,262,267,267,89,'r',244,253,262,262,90,'r',205,218,232,232,91,'c',223,223,231,231,92,'c',222,227,231,234,93,'c',221,227,234,237,94,'r',222,224,234,242,95,'c',227,227,234,245,96,'c',225,243,245,250,97,'r',218,222,229,229,98,'r',163,184,212,213,99,'r',159,164,168,179];
for(var n=0;n<cs.length;n+=6){var i=cs[n],t=cs[n+1],wt=cs[n+2],bt=cs[n+3],bb=cs[n+4],wb=cs[n+5],x=Math.round(X(i)),c=t=='c'?'#54fcfc':'#f33';
 R(x,wt,1.5,wb-wt,c);
 if(t=='c')R(x-5,bt,11,Math.max(bb-bt,2),c);
 else if(t=='f')R(x-5,bt,11,Math.max(bb-bt,3),'#f22');
 else o.push('<rect x="'+(x-5)+'" y="'+bt+'" width="10" height="'+(bb-bt)+'" fill="'+(t=='w'?'#fff':'none')+'" stroke="#f33" stroke-width="2"/>');}
R(534,263,6,17,'#ff0');R(805,148,11,12,'#ff0');R(810,160,1,11,'#54fcfc');
L(teal,'#00bbcc',2);L(grn,'#0f0',2);L(red,'#f00',2);L(mag,'#f0f',2);L(yp,'#ff0',2);L(wp,'#fff',2);
R(505,275,1004,3,'#ff0');R(1416,219,93,3,'#90f');
// markers
[[483,236,246],[817,160,169],[1379,206,216]].forEach(function(a){R(a[0],a[1],17,7,'#f00');R(a[0],a[2],17,4,'#0f0')});
[[492,260],[825,185],[1388,229]].forEach(function(a){var x=a[0],y=a[1];o.push('<g transform="translate('+x+' '+y+')" fill="none" stroke="#f2b070" stroke-width="2"><circle cx="1" cy="-6" r="1.6" fill="#f2b070"/><path d="M0-3l1 5-4 5M1 2l4 5M-3-1l3-2 4 2"/></g>')});
[[416,331],[462,324]].forEach(function(a){o.push('<g transform="translate('+a[0]+' '+a[1]+')"><circle r="6.5" cy="2" fill="#f3d9a0" stroke="#a86a20"/><path d="M-2-9l4 0-1 4h-2z" fill="#c9a050"/><text y="6" text-anchor="middle" font-size="10" font-weight="bold" fill="#8a5010" font-family="Liberation Sans">$</text></g>')});
o.push('<path d="M1233 309l3-6 3 6z" fill="#f73"/>');
// lower pane
var M=[372,357,335,333,345,377,400,411,411,423,431,412,411,405,398,390,411,418,423,436,444,450,452,436,436,436,397,372,379,373,350,288,265,255,273,257,255,212,215,209,205,224,216,240,285,305,290,250,222,235,257,218,170,112,107,72,87,83,95,98,155,187,213,226,233,241,255,252,255,260,272,330,340,328,328,300,313,328,306,333,358,385,358,358,378,405,390,385,366,343,300,290,290,290,285,290,300,290,240,195];
var C=[235,250,272,273,258,230,210,196,195,182,177,195,195,204,210,217,195,188,183,172,167,156,156,172,172,172,207,236,230,236,260,315,338,350,333,347,347,397,393,395,406,385,390,375,325,298,318,360,385,370,352,395,445,498,500,536,520,528,514,510,450,420,395,380,375,365,352,356,355,348,335,285,267,283,283,310,295,283,300,275,250,222,250,250,228,205,217,222,245,267,305,320,320,320,327,318,307,318,365,413];
var W=[293,293,293,291,291,291,288,285,285,281,278,278,278,273,273,273,270,268,266,263,261,260,258,256,254,252,250,248,248,248,357,354,354,350,345,345,345,342,339,336,333,330,327,327,325,324,322,321,321,318,318,315,312,306,302,297,294,288,285,278,276,276,273,273,273,270,270,270,270,270,270,332,332,330,328,328,328,327,326,326,325,324,322,320,318,315,312,310,309,309,305,295,295,295,295,295,295,295,295,295];
var Yt={29:561,30:423,31:249,32:114,33:15,67:33,68:107,69:173,70:245,71:348,72:438,73:495,74:543,75:560,76:582,93:591,94:495,95:411,96:345,97:234,98:110,99:-24};
for(var k=34;k<=66;k++)Yt[k]=-24;
var Rt=[684,624,579,507,474,444,414,408,390,384,417,468,483,453,396,363,345,282,210,144,117,72,75,84,105,126,177,240,309,381,468,561,675];
var Y=function(z){return z/3+700},BASE=906;
Rt.forEach(function(v,j){R(X(j+34)-4.5,v/3+460,9,692-(v/3+460),'#f00')});
for(var i=0;i<100;i++){var x=X(i);
 if(Yt[i]!==undefined)R(x-4.5,Y(Yt[i]),9,BASE-Y(Yt[i]),'#ff0');
 if(M[i]<W[i])R(x-4.5,Y(M[i]),9,Y(W[i])-Y(M[i]),'#f00');
 if(C[i]<W[i])R(x-4.5,Y(C[i]),9,Y(W[i])-Y(C[i]),'#047d3c');
 if(i>=53&&i<=59){R(x-4,Y(W[i]),8,BASE-Y(W[i]),'#fff')}
 else if(M[i]>W[i]){R(x-2.5,Y(W[i]),5,Y(M[i])-Y(W[i]),'#fff');R(x-2.5,Y(M[i]),5,BASE-Y(M[i]),'#aaa')}
 else R(x-2.5,Y(W[i]),5,BASE-Y(W[i]),'#aaa');
}
R(4,691,1509,3,'#f11');
R(4,907,1509,4,'#fff');R(4,907,1509,2,'#f60');
L(C.map(function(v,i){return[X(i),Y(v)]}),'#0ff',2.6);
L(M.map(function(v,i){return[X(i),Y(v)]}),'#f0f',2.6);
[[477,825],[706,825],[1146,822],[1374,822]].forEach(function(a){o.push('<path transform="translate('+a[0]+' '+a[1]+')" d="M-5-9a1 1 0 0 1 2 0v5l6 1c2 1 3 2 3 4v4c0 3-2 5-5 5h-2c-2 0-3-2-4-4l-3-5 2-1 1 2z" fill="#f2c078" stroke="#a2682a" stroke-width=".8"/>')});
document.getElementById('chart').innerHTML=o.join('');
</script>
</body></html>
